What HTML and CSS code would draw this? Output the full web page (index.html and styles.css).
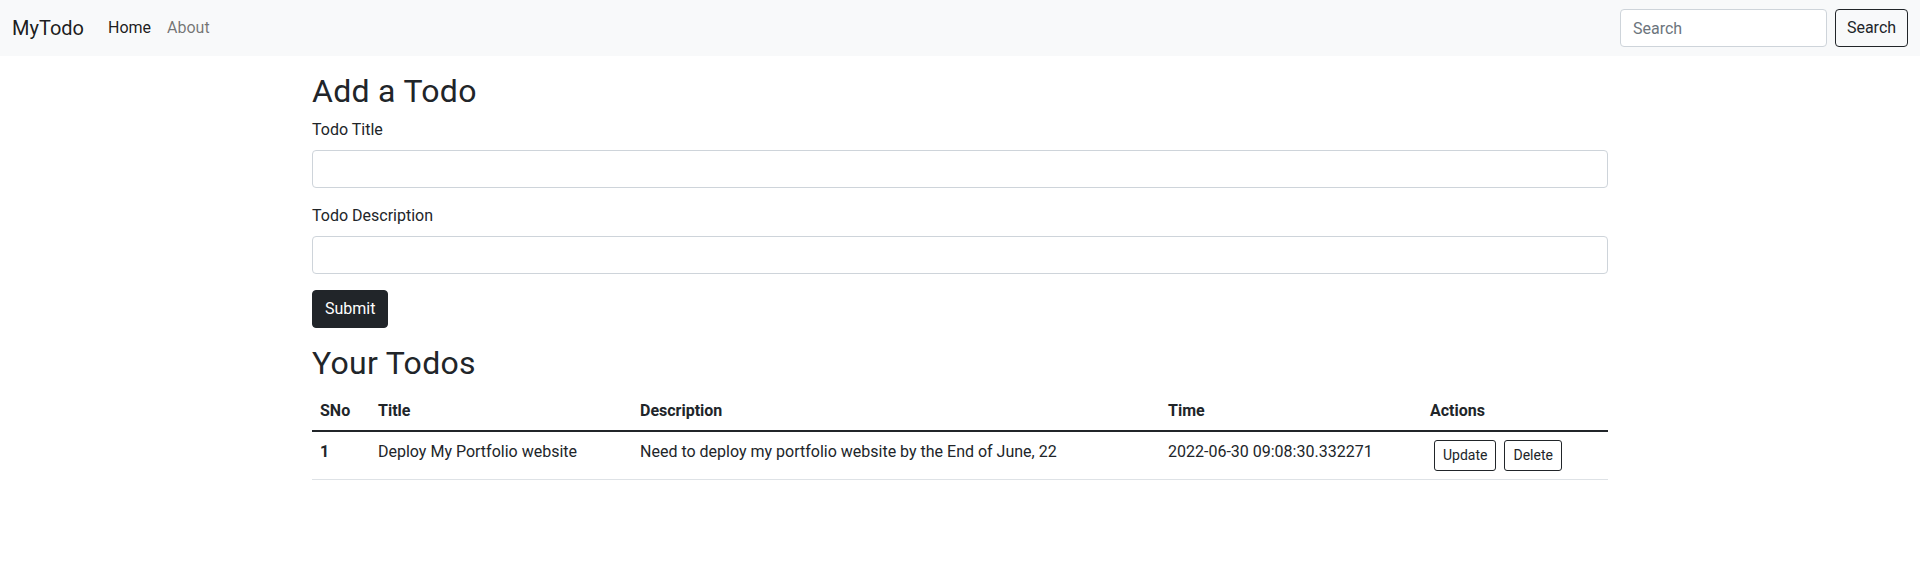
FILE: index.html
```html
<!DOCTYPE html>
<html lang="en">
<head>
<meta charset="utf-8">
<title>MyTodo</title>
<link rel="stylesheet" href="styles.css">
</head>
<body>
<nav class="navbar">
  <div class="navbar-inner">
    <a class="brand" href="#">MyTodo</a>
    <ul class="nav">
      <li><a class="nav-link active" href="#">Home</a></li>
      <li><a class="nav-link" href="#">About</a></li>
    </ul>
    <form class="search-form">
      <input class="search-input" type="search" placeholder="Search">
      <button class="btn btn-outline btn-search" type="button">Search</button>
    </form>
  </div>
</nav>

<div class="container">
  <h2 class="heading">Add a Todo</h2>
  <form class="todo-form">
    <div class="field">
      <label class="form-label">Todo Title</label>
      <input class="form-control" type="text">
    </div>
    <div class="field">
      <label class="form-label">Todo Description</label>
      <input class="form-control" type="text">
    </div>
    <button class="btn btn-dark" type="button">Submit</button>
  </form>
</div>

<div class="container">
  <h2 class="heading">Your Todos</h2>
  <table class="table">
    <colgroup>
      <col class="c-sno"><col class="c-title"><col class="c-desc"><col class="c-time"><col class="c-act">
    </colgroup>
    <thead>
      <tr>
        <th>SNo</th>
        <th>Title</th>
        <th>Description</th>
        <th>Time</th>
        <th>Actions</th>
      </tr>
    </thead>
    <tbody>
      <tr>
        <th>1</th>
        <td>Deploy My Portfolio website</td>
        <td>Need to deploy my portfolio website by the End of June, 22</td>
        <td>2022-06-30 09:08:30.332271</td>
        <td>
          <div class="actions">
            <button class="btn btn-outline btn-sm" type="button">Update</button>
            <button class="btn btn-outline btn-sm" type="button">Delete</button>
          </div>
        </td>
      </tr>
    </tbody>
  </table>
</div>
</body>
</html>
```
FILE: styles.css
```css
* { box-sizing: border-box; }

html, body {
  margin: 0;
  padding: 0;
}

body {
  font-family: Roboto, "Liberation Sans", sans-serif;
  font-size: 16px;
  line-height: 1.5;
  color: #212529;
  background: #fff;
}

a { text-decoration: none; }

/* Navbar */
.navbar {
  background: #f8f9fa;
  padding: 8px 0;
}

.navbar-inner {
  display: flex;
  align-items: center;
  padding: 0 12px;
}

.brand {
  font-size: 20px;
  line-height: 30px;
  padding: 5px 0;
  margin-right: 16px;
  color: rgba(0, 0, 0, 0.9);
}

.nav {
  display: flex;
  list-style: none;
  margin: 0;
  padding: 0;
  flex: 1;
}

.nav-link {
  display: block;
  padding: 8px;
  line-height: 24px;
  color: rgba(0, 0, 0, 0.55);
}

.nav-link.active { color: rgba(0, 0, 0, 0.9); }

.search-form {
  display: flex;
  align-items: center;
  gap: 8px;
  margin: 0;
}

.search-input {
  width: 207px;
  height: 38px;
  padding: 6px 12px;
  font: inherit;
  color: #212529;
  background: #fff;
  border: 1px solid #ced4da;
  border-radius: 4px;
  outline: none;
}

.search-input::placeholder { color: #6c757d; }

/* Buttons */
.btn {
  display: inline-block;
  font: inherit;
  line-height: 24px;
  padding: 6px 12px;
  border: 1px solid transparent;
  border-radius: 4px;
  cursor: pointer;
  background: transparent;
}

.btn-outline {
  color: #212529;
  border-color: #212529;
}

.btn-search {
  width: 73px;
  padding-left: 0;
  padding-right: 0;
  text-align: center;
}

.btn-dark {
  color: #fff;
  background: #212529;
  border-color: #212529;
}

.btn-sm {
  font-size: 14px;
  line-height: 21px;
  padding: 4px 8px;
  border-radius: 3px;
}

/* Content */
.container {
  max-width: 1320px;
  margin: 16px auto;
  padding: 0 12px;
}

.heading {
  font-size: 32px;
  font-weight: 400;
  line-height: 1.2;
  letter-spacing: 0.3px;
  margin: 0 0 8px;
}

.todo-form { margin: 0; }

.field { margin-bottom: 16px; }

.form-label {
  display: block;
  margin-bottom: 8px;
}

.form-control {
  display: block;
  width: 100%;
  height: 38px;
  padding: 6px 12px;
  font: inherit;
  border: 1px solid #ced4da;
  border-radius: 4px;
  background: #fff;
  outline: none;
}

/* Table */
.table {
  width: 100%;
  border-collapse: collapse;
  table-layout: fixed;
  margin-bottom: 16px;
}

.c-sno { width: 58px; }
.c-title { width: 262px; }
.c-desc { width: 528px; }
.c-time { width: 262px; }
.c-act { width: 186px; }

.table th,
.table td {
  text-align: left;
  vertical-align: top;
  padding: 8px;
  border-bottom: 1px solid #dee2e6;
}

.table th { font-weight: 700; }

.table thead th {
  padding-bottom: 7px;
  border-bottom: 2px solid #212529;
}

.actions {
  display: flex;
  gap: 8px;
  padding-left: 4px;
}
```
